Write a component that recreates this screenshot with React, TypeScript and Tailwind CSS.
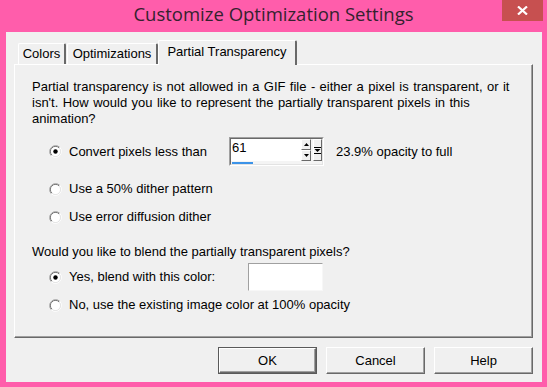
import React from "react";

function Radio({ checked }: { checked?: boolean }) {
  return (
    <svg width="13" height="13" viewBox="0 0 13 13" className="shrink-0">
      {/* outer ring */}
      <path d="M10.74 2.26 A6 6 0 0 0 2.26 10.74" fill="none" stroke="#a0a0a0" strokeWidth="1" />
      <path d="M2.26 10.74 A6 6 0 0 0 10.74 2.26" fill="none" stroke="#ffffff" strokeWidth="1" />
      {/* inner ring */}
      <path d="M10.04 2.96 A5 5 0 0 0 2.96 10.04" fill="none" stroke="#696969" strokeWidth="1" />
      <path d="M2.96 10.04 A5 5 0 0 0 10.04 2.96" fill="none" stroke="#e3e3e3" strokeWidth="1" />
      <circle cx="6.5" cy="6.5" r="4.5" fill="#fff" />
      {checked && <circle cx="6.5" cy="6.5" r="2.2" fill="#000" />}
    </svg>
  );
}

function SpinBox() {
  return (
    <div className="h-[29px] w-[95px] border border-t-[#a0a0a0] border-l-[#a0a0a0] border-r-white border-b-white">
      <div className="flex h-full w-full flex-col border border-t-[#696969] border-l-[#696969] border-r-[#e3e3e3] border-b-[#e3e3e3] bg-[#f4f4f4]">
        <div className="flex h-[22px]">
          {/* text field */}
          <div className="w-[70px] bg-white pl-[1px] pt-[1px] text-[13px] leading-[15px]">61</div>
          {/* up / down */}
          <div className="flex w-[10px] flex-col">
            <div className="flex h-[11px] items-center justify-center border border-t-white border-l-white border-r-[#696969] border-b-[#696969] bg-[#f0f0f0]">
              <svg width="5" height="3" viewBox="0 0 5 3">
                <path d="M2.5 0 L5 3 L0 3 Z" fill="#000" />
              </svg>
            </div>
            <div className="flex h-[11px] items-center justify-center border border-t-white border-l-white border-r-[#696969] border-b-[#696969] bg-[#f0f0f0]">
              <svg width="5" height="3" viewBox="0 0 5 3">
                <path d="M0 0 L5 0 L2.5 3 Z" fill="#000" />
              </svg>
            </div>
          </div>
          {/* dropdown */}
          <div className="ml-[2px] flex w-[9px] items-center justify-center border border-t-white border-l-white border-r-[#696969] border-b-[#696969] bg-[#f0f0f0]">
            <svg width="7" height="7" viewBox="0 0 7 7">
              <rect x="0" y="0" width="7" height="1" fill="#000" />
              <path d="M0.5 2 L6.5 2 L3.5 5 Z" fill="#000" />
              <rect x="0" y="6" width="7" height="1" fill="#000" />
            </svg>
          </div>
        </div>
        <div className="flex h-[3px] items-center pl-[1px]">
          <div className="h-[2px] w-[21px] bg-[#3c93e8]" />
        </div>
      </div>
    </div>
  );
}

function Tab({ label, active, width }: { label: string; active?: boolean; width: string }) {
  if (active) {
    return (
      <div
        className={`relative z-10 -mb-px flex h-[25px] items-start justify-center rounded-t-[2px] border-l border-t border-r-2 border-l-white border-t-white border-r-[#696969] bg-[#f0f0f0] pt-[3px] ${width}`}
      >
        {label}
      </div>
    );
  }
  return (
    <div
      className={`flex h-[21px] items-center justify-center rounded-t-[2px] border-l border-t border-r-2 border-l-white border-t-white border-r-[#696969] ${width}`}
    >
      {label}
    </div>
  );
}

function Button({ label, primary }: { label: string; primary?: boolean }) {
  return (
    <button
      className={`flex h-[27px] w-[99px] items-center justify-center ${
        primary ? "border border-[#5a5a5a]" : ""
      }`}
    >
      <span className="flex h-full w-full items-center justify-center border border-t-white border-l-white border-r-[#696969] border-b-[#696969] bg-[#f0f0f0] shadow-[inset_-1px_-1px_0_#a0a0a0]">
        {label}
      </span>
    </button>
  );
}

export default function App() {
  return (
    <div
      className="flex h-[387px] w-[547px] flex-col bg-[#ff5dab] text-[13px] leading-[16px] text-black"
      style={{ fontFamily: '"Liberation Sans", Arial, sans-serif' }}
    >
      {/* Title bar */}
      <div className="relative flex h-[32px] shrink-0 justify-center pt-[2px]">
        <span
          className="text-[18.5px] leading-[24px] text-[#35222f]"
          style={{ fontFamily: '"Open Sans", "Noto Sans", sans-serif' }}
        >
          Customize Optimization Settings
        </span>
        <div className="absolute right-[4px] top-0 flex h-[21px] w-[41px] items-center justify-center bg-[#c75050]">
          <svg width="11" height="9" viewBox="0 0 11 9">
            <path d="M1 0.5 L10 8.5 M10 0.5 L1 8.5" stroke="#fff" strokeWidth="2.2" />
          </svg>
        </div>
      </div>

      {/* Client area */}
      <div className="ml-[6px] mr-[5px] mb-[5px] flex flex-1 flex-col bg-[#f0f0f0] pt-[8px]">
        {/* Tabs */}
        <div className="ml-[12px] flex h-[24px] items-end gap-[1px]">
          <Tab label="Colors" width="w-[48px]" />
          <Tab label="Optimizations" width="w-[91px]" />
          <Tab label="Partial Transparency" active width="w-[139px] -ml-[1px]" />
        </div>

        {/* Tab panel */}
        <div className="ml-[8px] h-[274px] w-[519px] border border-t-white border-l-white border-r-[#696969] border-b-[#696969] shadow-[inset_-1px_-1px_0_#a0a0a0]">
          <div className="flex flex-col pl-[17px]">
            <p className="mt-[14px] [word-spacing:0.8px]">
              Partial transparency is not allowed in a GIF file - either a pixel is transparent, or it
              <br />
              isn't. How would you like to represent the partially transparent pixels in this
              <br />
              animation?
            </p>

            <div className="mt-[10px] flex h-[29px] items-center pl-[17px]">
              <Radio checked />
              <span className="ml-[7px] w-[160px]">Convert pixels less than</span>
              <SpinBox />
              <span className="ml-[12px]">23.9% opacity to full</span>
            </div>

            <div className="mt-[13px] flex h-[20px] items-center pl-[17px]">
              <Radio />
              <span className="ml-[7px]">Use a 50% dither pattern</span>
            </div>

            <div className="mt-[8px] flex h-[20px] items-center pl-[17px]">
              <Radio />
              <span className="ml-[7px]">Use error diffusion dither</span>
            </div>

            <p className="mt-[17px]">Would you like to blend the partially transparent pixels?</p>

            <div className="mt-[3px] flex h-[28px] items-center pl-[17px]">
              <Radio checked />
              <span className="ml-[7px] w-[179px]">Yes, blend with this color:</span>
              <div className="h-[28px] w-[75px] border border-t-[#a0a0a0] border-l-[#a0a0a0] border-r-[#f7f7f7] border-b-[#f7f7f7] bg-white" />
            </div>

            <div className="mt-[4px] flex h-[20px] items-center pl-[17px]">
              <Radio />
              <span className="ml-[7px]">No, use the existing image color at 100% opacity</span>
            </div>
          </div>
        </div>

        {/* Buttons */}
        <div className="mt-[9px] flex justify-end gap-[9px] pr-[9px]">
          <Button label="OK" primary />
          <Button label="Cancel" />
          <Button label="Help" />
        </div>
      </div>
    </div>
  );
}
